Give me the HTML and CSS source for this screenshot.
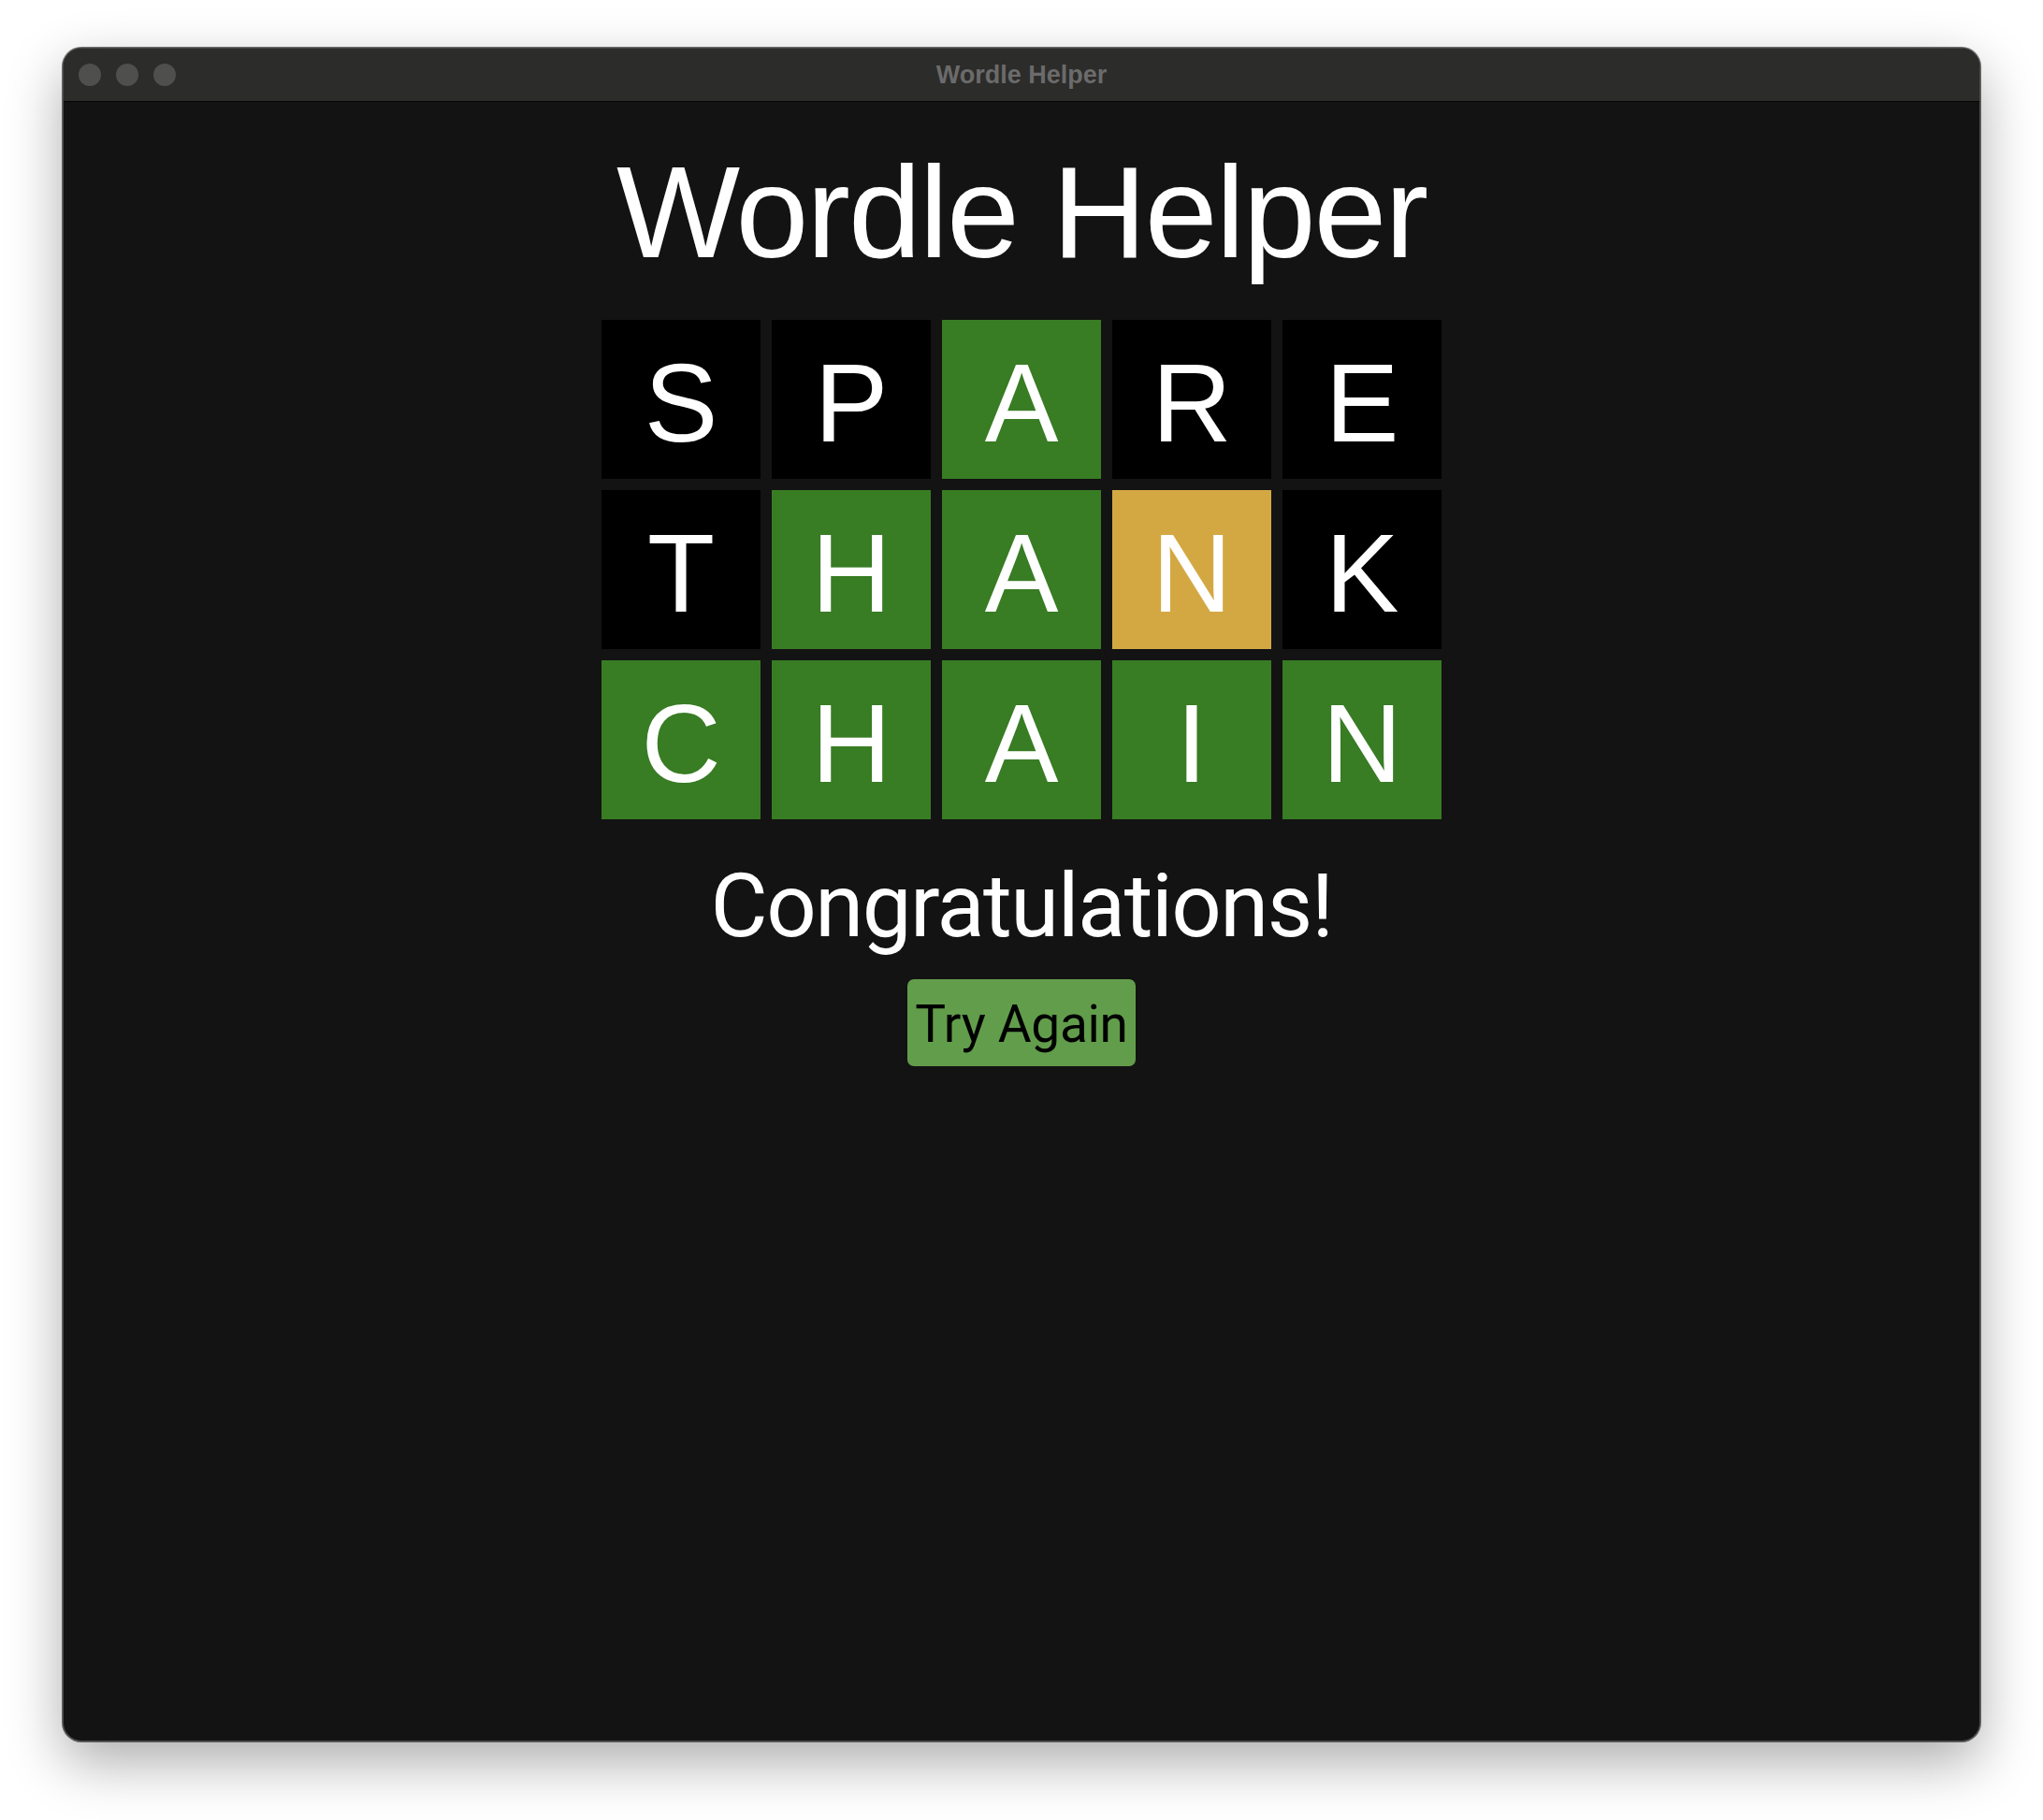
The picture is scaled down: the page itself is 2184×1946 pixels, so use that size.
FILE: index.html
```html
<!DOCTYPE html>
<html>
<head>
<meta charset="utf-8">
<title>Wordle Helper</title>
<link rel="stylesheet" href="styles.css">
</head>
<body>
<div class="desk">
  <div class="window">
    <div class="titlebar">
      <div class="lights">
        <span class="light"></span>
        <span class="light"></span>
        <span class="light"></span>
      </div>
      <div class="wintitle">Wordle Helper</div>
    </div>
    <main class="content">
      <h1 class="title">Wordle Helper</h1>
      <div class="grid">
        <div class="tile absent">S</div>
        <div class="tile absent">P</div>
        <div class="tile correct">A</div>
        <div class="tile absent">R</div>
        <div class="tile absent">E</div>
        <div class="tile absent">T</div>
        <div class="tile correct">H</div>
        <div class="tile correct">A</div>
        <div class="tile present">N</div>
        <div class="tile absent">K</div>
        <div class="tile correct">C</div>
        <div class="tile correct">H</div>
        <div class="tile correct">A</div>
        <div class="tile correct">I</div>
        <div class="tile correct">N</div>
      </div>
      <div class="message">Congratulations!</div>
      <button class="again">Try Again</button>
    </main>
  </div>
</div>
</body>
</html>
```

FILE: styles.css
```css
html, body {
  margin: 0;
  padding: 0;
  background: #ffffff;
}

.desk {
  padding: 51px 0 0 67px;
  height: 1946px;
  box-sizing: border-box;
}

.window {
  width: 2050px;
  height: 1811px;
  box-sizing: border-box;
  border-radius: 20px;
  border: 1px solid #4a4a4a;
  background: #131313;
  overflow: hidden;
  display: flex;
  flex-direction: column;
  box-shadow: 0 0 0 1px rgba(0,0,0,0.55), 0 22px 60px rgba(0,0,0,0.33);
}

.titlebar {
  position: relative;
  height: 56px;
  flex: none;
  background: #2c2c2a;
  border-bottom: 1px solid #050505;
  display: flex;
  align-items: center;
}

.lights {
  display: flex;
  gap: 16px;
  padding-left: 16px;
}

.light {
  width: 24px;
  height: 24px;
  border-radius: 50%;
  background: #4f4f4e;
}

.wintitle {
  position: absolute;
  left: 0;
  right: 0;
  top: 0;
  bottom: 0;
  display: flex;
  align-items: center;
  justify-content: center;
  font-family: "Liberation Sans", Arial, sans-serif;
  font-weight: bold;
  font-size: 27px;
  color: #6b6b6b;
}

.content {
  flex: 1;
  display: flex;
  flex-direction: column;
  align-items: center;
}

.title {
  margin: 48px 0 0 0;
  font-family: "Liberation Sans", Arial, sans-serif;
  font-weight: normal;
  font-size: 140px;
  line-height: 1;
  color: #ffffff;
  letter-spacing: -2px;
}

.grid {
  margin-top: 45px;
  display: grid;
  grid-template-columns: repeat(5, 170px);
  grid-auto-rows: 170px;
  gap: 12px;
}

.tile {
  display: flex;
  align-items: center;
  justify-content: center;
  padding-top: 8px;
  box-sizing: border-box;
  font-family: "Liberation Sans", Arial, sans-serif;
  font-size: 118px;
  line-height: 1;
  color: #ffffff;
}

.absent { background: #000000; }
.correct { background: #387c24; }
.present { background: #d3a843; }

.message {
  margin-top: 46px;
  font-family: Roboto, "Liberation Sans", sans-serif;
  font-size: 94px;
  line-height: 1;
  color: #ffffff;
  letter-spacing: -1.5px;
}

.again {
  margin-top: 31px;
  height: 93px;
  padding: 4px 8px 0 8px;
  box-sizing: border-box;
  border: none;
  border-radius: 7px;
  background: #629d4b;
  color: #000000;
  font-family: Roboto, "Liberation Sans", sans-serif;
  font-size: 55px;
  line-height: 1;
  letter-spacing: -0.3px;
}
```
